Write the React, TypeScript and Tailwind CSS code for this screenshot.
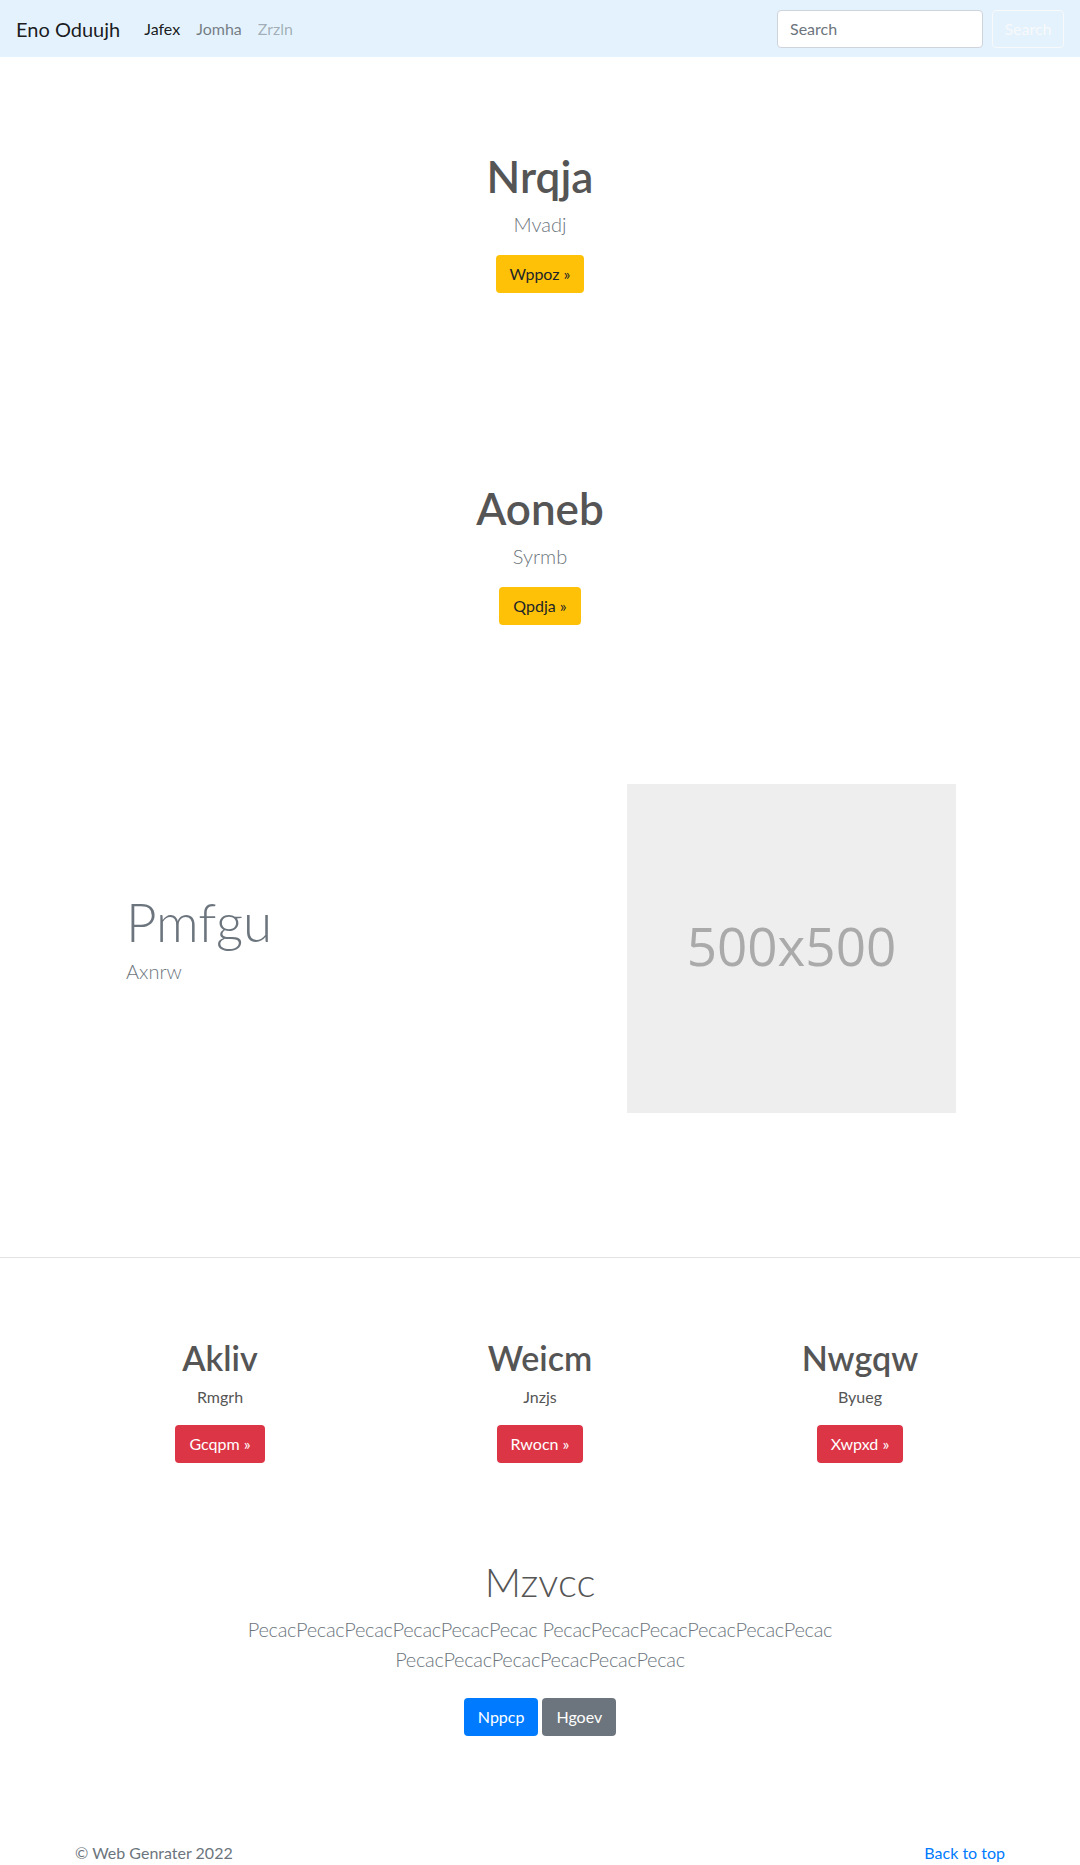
import React from "react";

const heroes = [
  { title: "Nrqja", sub: "Mvadj", cta: "Wppoz »" },
  { title: "Aoneb", sub: "Syrmb", cta: "Qpdja »" },
];

const columns = [
  { title: "Akliv", sub: "Rmgrh", cta: "Gcqpm »" },
  { title: "Weicm", sub: "Jnzjs", cta: "Rwocn »" },
  { title: "Nwgqw", sub: "Byueg", cta: "Xwpxd »" },
];

function Navbar() {
  return (
    <nav className="flex h-[57px] items-center bg-[#e3f2fd] pl-4 pr-4">
      <a className="mr-4 text-[20px] leading-[30px] text-black/90">Eno Oduujh</a>
      <ul className="flex text-[16px] leading-6">
        <li className="px-2 text-black/90">Jafex</li>
        <li className="px-2 text-black/50">Jomha</li>
        <li className="px-2 text-black/30">Zrzln</li>
      </ul>
      <div className="ml-auto flex items-center">
        <input
          placeholder="Search"
          className="mr-[9px] h-[38px] w-[206px] rounded border border-[#ced4da] bg-white px-3 text-[16px] text-[#495057] placeholder:text-[#6c757d] outline-none"
        />
        <button className="h-[38px] w-[72px] rounded border border-[#f8f9fa] text-[16px] text-[#f8f9fa]">
          Search
        </button>
      </div>
    </nav>
  );
}

function Hero({ title, sub, cta, top }: { title: string; sub: string; cta: string; top: string }) {
  return (
    <section className={`${top} pb-[96px] text-center`}>
      <h1 className="mb-[6px] text-[44px] font-semibold leading-[53px] text-[#555]">{title}</h1>
      <p className="mb-4 text-[20px] font-light leading-[30px] text-[#6c757d]">{sub}</p>
      <button className="h-[38px] rounded bg-[#ffc107] px-[14px] text-[16px] text-[#212529]">{cta}</button>
    </section>
  );
}

export default function App() {
  return (
    <div className="min-h-screen bg-white font-['Lato',sans-serif]">
      <Navbar />

      <Hero {...heroes[0]} top="pt-[93px]" />
      <Hero {...heroes[1]} top="pt-[93px]" />

      <section className="grid grid-cols-2 items-center pt-[63px] pb-[144px]">
        <div className="pl-[126px] pb-[23px]">
          <h1 className="mb-[2px] text-[53px] font-light leading-[65px] text-[#6c757d]">Pmfgu</h1>
          <p className="text-[20px] font-light leading-[30px] text-[#6c757d]">Axnrw</p>
        </div>
        <div className="pl-[87px]">
          <div className="flex h-[329px] w-[329px] items-center justify-center bg-[#eeeeee] pb-[6px] font-['Open_Sans',sans-serif] text-[53px] text-[#aaaaaa]">
            500x500
          </div>
        </div>
      </section>

      <hr className="border-t border-[#e2e2e2]" />

      <section className="mx-auto grid w-[960px] grid-cols-3 pt-[79px] text-center">
        {columns.map((c) => (
          <div key={c.title} className="px-[15px]">
            <h2 className="mb-[7px] text-[34px] font-semibold leading-[41px] text-[#555]">{c.title}</h2>
            <p className="mb-4 text-[16px] leading-6 text-[#555]">{c.sub}</p>
            <button className="h-[38px] rounded bg-[#dc3545] px-[14px] text-[16px] text-white">{c.cta}</button>
          </div>
        ))}
      </section>

      <section className="pt-[95px] pb-12 text-center">
        <h1 className="mb-2 text-[40px] font-light leading-[48px] text-[#555]">Mzvcc</h1>
        <p className="mx-auto mb-4 max-w-[610px] text-[20px] font-light leading-[30px] tracking-[-0.015em] text-[#6c757d]">
          PecacPecacPecacPecacPecacPecac PecacPecacPecacPecacPecacPecac PecacPecacPecacPecacPecacPecac
        </p>
        <div className="flex justify-center gap-1 pt-2">
          <button className="h-[38px] rounded bg-[#007bff] px-[14px] text-[16px] text-white">Nppcp</button>
          <button className="h-[38px] rounded bg-[#6c757d] px-[14px] text-[16px] text-white">Hgoev</button>
        </div>
      </section>

      <footer className="mx-auto flex w-[960px] justify-between px-[15px] pt-[57px] pb-12 text-[16px] leading-6">
        <p className="text-[#6c757d]">© Web Genrater 2022</p>
        <a className="text-[#007bff]">Back to top</a>
      </footer>
    </div>
  );
}
